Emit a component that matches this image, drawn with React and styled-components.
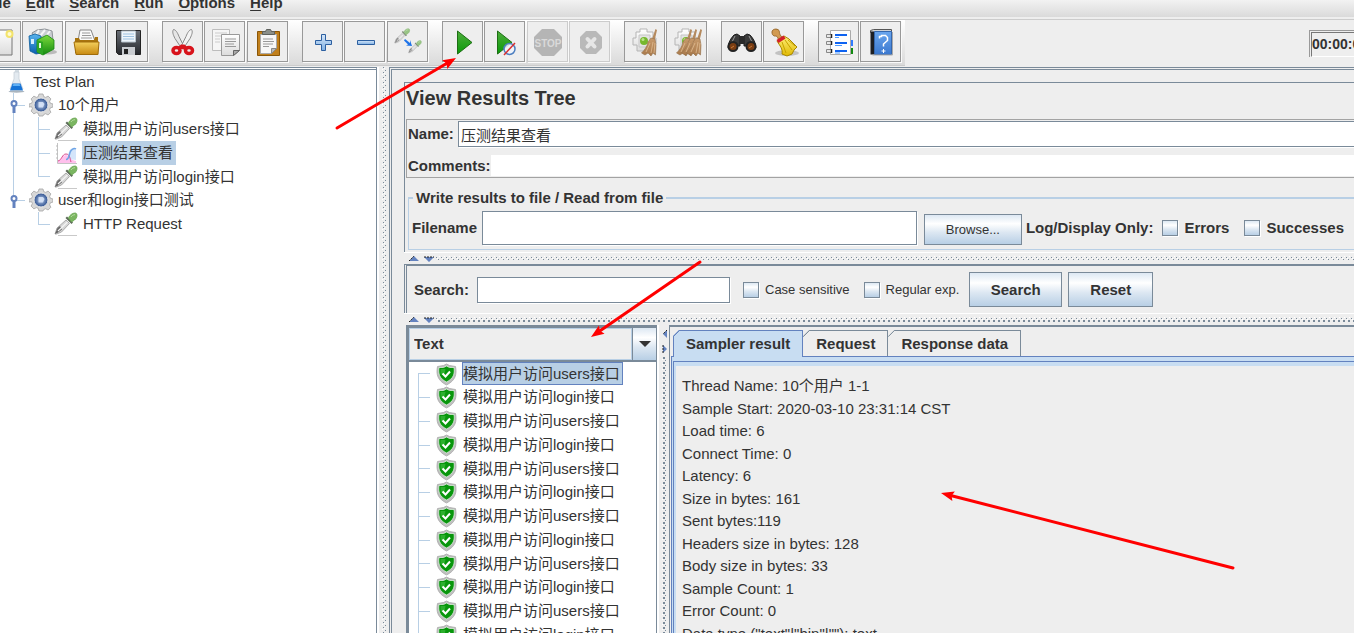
import React from "react";
import styled, { createGlobalStyle, css } from "styled-components";

const C = {
  face: "#eeeeee",
  text: "#333333",
  line: "#7a8a99",
  soft: "#b8cfe5",
  accent: "#6382bf",
  tab: "#c8ddf2",
};

const GlobalStyle = createGlobalStyle`
  *, *::before, *::after { box-sizing: border-box; }
  body {
    margin: 0;
    background: ${C.face};
    color: ${C.text};
    font: 15px/20px "Liberation Sans", "Noto Sans CJK SC", sans-serif;
  }
  button, input, select { font: inherit; color: inherit; margin: 0; }
`;

const metal = "linear-gradient(#dde8f3 0%, #ffffff 30%, #dce7f2 60%, #b8cfe5 100%)";
const dot = (size, color) => `conic-gradient(at ${size}px ${size}px, transparent 75%, ${color} 0)`;
const bumps = css`
  background-color: ${C.face};
  background-image:
    ${dot(1, C.line)},
    ${(p) => dot(p.$heavy ? 2 : 1, C.line)},
    ${dot(1, "#fff")},
    ${dot(1, "#fff")};
  background-size: 5px 5px;
`;

/* ---------- shell ---------- */
const Shell = styled.div`
  position: relative;
  display: flex;
  flex-direction: column;
  height: 100vh;
  overflow: hidden;
`;

const MenuBar = styled.nav`
  display: flex;
  gap: 15px;
  flex: none;
  height: 20px;
  margin-left: -15px;
  border-bottom: 1px solid #cccccc;
  background: linear-gradient(#f2f2f2 0, #dadada 17px, ${C.face} 17px);
`;

const MenuItem = styled.button`
  height: 20px;
  margin-top: -7px;
  padding: 0;
  border: 0;
  background: none;
  font-weight: bold;
  line-height: 20px;
  white-space: nowrap;
  u { text-underline-offset: 2px; }
`;

const ToolRow = styled.div`
  display: flex;
  flex: none;
  justify-content: space-between;
  align-items: flex-start;
  height: 46px;
  margin-bottom: 1px;
`;

const ToolBar = styled.div`
  display: flex;
  gap: 14px;
  height: 46px;
  margin-left: -20px;
  padding: 1px 4px 4px 0;
  border-bottom: 1px solid #cccccc;
  background: linear-gradient(#ffffff, #dadada);
`;

const ToolGroup = styled.div`
  display: flex;
  gap: 1px;
`;

const ToolButton = styled.button`
  width: 41px;
  height: 41px;
  padding: 0;
  border: 1px solid ${(p) => (p.disabled ? "#cccccc" : "#999999")};
  background: ${C.face};
  box-shadow: 1px 1px 0 #fafafa;
  &:nth-child(3n) { margin-left: 1px; }
  svg { display: block; }
`;

const Timer = styled.output`
  width: 45px;
  height: 27px;
  margin-top: 10px;
  overflow: hidden;
  border: solid #999999;
  border-width: 1px 0 0 1px;
  padding: 1px 0 0 1px;
  span {
    display: block;
    height: 25px;
    border-top: 1px solid #777777;
    border-left: 1px solid #777777;
    border-bottom: 1px solid #ffffff;
    font-size: 14px;
    font-weight: bold;
    line-height: 23px;
    white-space: nowrap;
  }
`;

const Workspace = styled.div`
  display: flex;
  flex: 1;
  min-height: 0;
`;

/* ---------- trees ---------- */
const TreePane = styled.aside`
  flex: 0 0 377px;
  border-top: 3px double ${C.line};
  border-right: 1px solid ${C.line};
  background: #ffffff;
  padding-left: 4px;
`;

const TreeList = styled.ul`
  display: grid;
  grid-auto-rows: 23px 24px 24px 24px;
  margin: 0;
  padding: 0;
  list-style: none;
`;

const TreeRow = styled.li`
  display: flex;
  align-items: center;
  white-space: nowrap;
  > svg { flex: none; margin-right: 4px; }
`;

const rail = `linear-gradient(${C.soft}, ${C.soft}) no-repeat`;
const guideLines = {
  none: "none",
  pass: `${rail} 9px 0 / 1px 100%`,
  first: `${rail} 9px 100% / 1px 50%, ${rail} 9px 50% / 12px 1px`,
  tee: `${rail} 9px 0 / 1px 100%, ${rail} 9px 50% / 12px 1px`,
  end: `${rail} 9px 0 / 1px 50%, ${rail} 9px 50% / 12px 1px`,
};

const Guide = styled.span`
  flex: none;
  align-self: stretch;
  display: flex;
  align-items: center;
  width: 25px;
  padding-left: 5px;
  background: ${(p) => guideLines[p.$kind]};
`;

const NodeLabel = styled.span`
  height: 100%;
  padding: 0 3px 0 1px;
  line-height: 23px;
  background: ${(p) => (p.$selected ? C.soft : "transparent")};
  box-shadow: ${(p) => (p.$focused ? `inset 0 0 0 1px ${C.accent}` : "none")};
`;

/* ---------- splitters ---------- */
const VSplitter = styled.div`
  flex: 0 0 12px;
  border-left: 2px solid #ffffff;
  padding-left: 3px;
  &::before {
    content: "";
    display: block;
    width: 5px;
    height: 100%;
    ${bumps}
    background-position: 3px 3px, 1px 0, 0 2px, 2px 1px;
  }
`;

const HSplitter = styled.div`
  display: flex;
  align-items: center;
  flex: none;
  height: 12px;
  border-top: 1px solid #ffffff;
  padding-left: 5px;
  svg { flex: none; margin-right: 2px; }
  &::after {
    content: "";
    flex: 1;
    height: 5px;
    ${bumps}
    background-position: 0 1px, 2px 3px, 3px 0, 1px 2px;
  }
`;

const ResultSplitter = styled(VSplitter)`
  display: flex;
  flex-direction: column;
  svg { flex: none; margin: 4px 0 2px; }
  &::before { order: 2; height: auto; flex: 1; }
`;

/* ---------- main pane ---------- */
const MainPane = styled.main`
  display: flex;
  flex: 1;
  flex-direction: column;
  min-width: 0;
  border-top: 3px double ${C.line};
  border-left: 3px double ${C.line};
  padding: 12px 0 0 12px;
`;

const HeaderPanel = styled.section`
  flex: none;
  border-top: 1px solid ${C.line};
  border-left: 1px solid ${C.line};
  padding: 0 0 2px 1px;
`;

const Title = styled.h1`
  margin: 0 0 6px;
  font-size: 20px;
  line-height: 30px;
`;

const NameBox = styled.div`
  display: grid;
  gap: 8px;
  border: 1px solid #a3a3a3;
  border-right: 0;
  padding: 1px 0 1px 1px;
`;

const NameRow = styled.div`
  display: flex;
  align-items: center;
  height: ${(p) => p.$h}px;
`;

const FieldLabel = styled.label`
  flex: none;
  min-width: ${(p) => p.$w || 0}px;
  font-weight: bold;
  white-space: nowrap;
`;

const TextInput = styled.input`
  flex: ${(p) => (p.$w ? `0 0 ${p.$w}px` : "1")};
  min-width: 0;
  height: ${(p) => p.$h}px;
  padding: 0 2px;
  border: 1px solid ${C.line};
  border-width: ${(p) => (p.$bare ? 0 : "1px")};
  border-radius: 0;
  background: #ffffff;
  box-shadow: ${(p) => (p.$bare ? "none" : "1px 1px 0 #ffffff")};
  outline: 0;
`;

const NameInput = styled(TextInput)`
  border-right: 0;
`;

const FileGroup = styled.fieldset`
  min-width: 0;
  margin: 10px 0 0 2px;
  border: solid ${C.soft};
  border-width: 2px 0 1px 1px;
  padding: 3px 10px 4px 3px;
  legend {
    margin-left: 1px;
    padding: 0 3px;
    font-weight: bold;
    line-height: 20px;
  }
`;

const FileRow = styled.div`
  display: flex;
  align-items: center;
  height: 34px;
`;

const MetalButton = styled.button`
  flex: none;
  width: ${(p) => p.$w}px;
  height: ${(p) => p.$h}px;
  padding: 0;
  border: 1px solid ${C.line};
  background: ${metal};
  font-size: ${(p) => (p.$small ? 13 : 15)}px;
  font-weight: ${(p) => (p.$small ? "normal" : "bold")};
  white-space: nowrap;
`;

const BrowseButton = styled(MetalButton)`
  margin: 3px 4px 0 7px;
`;

const Check = styled.label`
  display: flex;
  flex: none;
  align-items: center;
  gap: 6px;
  margin-left: ${(p) => p.$gap}px;
  font-size: ${(p) => (p.$small ? 13 : 15)}px;
  font-weight: ${(p) => (p.$small ? "normal" : "bold")};
  white-space: nowrap;
  input {
    appearance: none;
    width: 16px;
    height: 16px;
    border: 1px solid ${C.line};
    background: ${metal};
    box-shadow: 1px 1px 0 #ffffff;
  }
`;

const SearchPanel = styled.form`
  display: flex;
  flex: none;
  align-items: center;
  border-top: 2px solid ${C.line};
  border-left: 3px double ${C.line};
  padding: 6px 0 6px 7px;
`;

const SearchButtons = styled.div`
  display: flex;
  gap: 6px;
  margin-left: 10px;
`;

const Results = styled.div`
  display: flex;
  flex: 1;
  min-height: 0;
  margin-left: 2px;
`;

const ResultList = styled.section`
  display: flex;
  flex: 0 0 251px;
  flex-direction: column;
  min-height: 0;
  border: solid ${C.line};
  border-width: 3px 1px 0 3px;
  background: #ffffff;
  overflow: hidden;
`;

const Combo = styled.div`
  display: flex;
  flex: none;
  height: 34px;
  border-bottom: 2px solid ${C.line};
  background: ${C.face};
`;

const ComboSelect = styled.select`
  appearance: none;
  flex: 1;
  min-width: 0;
  border: 1px solid ${C.soft};
  border-radius: 0;
  padding: 0 4px;
  background: ${C.face};
  font-weight: bold;
`;

const ComboArrow = styled.span`
  display: flex;
  align-items: center;
  justify-content: center;
  width: 24px;
  border-left: 1px solid ${C.line};
  background: ${metal};
`;

const TabPanel = styled.section`
  display: flex;
  flex: 1;
  flex-direction: column;
  min-width: 0;
  border-top: 2px solid ${C.line};
  border-left: 1px solid ${C.line};
  padding: 3px 0 0 1px;
  overflow: hidden;
`;

const TabStrip = styled.div`
  display: flex;
  flex: none;
  height: 26px;
  padding-left: 2px;
`;

const Tab = styled.button`
  position: relative;
  height: ${(p) => (p.$active ? 27 : 26)}px;
  padding: 0 12px;
  border: 1px solid ${(p) => (p.$active ? C.accent : C.line)};
  border-bottom: 0;
  border-left-color: ${(p) => (p.$active ? C.accent : "transparent")};
  background:
    linear-gradient(135deg, ${C.face} 4px, ${(p) => (p.$active ? C.accent : C.line)} 4px, ${(p) => (p.$active ? C.accent : C.line)} 5px, transparent 5px) border-box,
    ${(p) => (p.$active ? C.tab : C.face)};
  clip-path: polygon(6px 0, 100% 0, 100% 100%, 0 100%, 0 6px);
  font-weight: bold;
  line-height: 24px;
  white-space: nowrap;
`;

const TabFrame = styled.div`
  flex: 1;
  display: flex;
  border-top: 1px solid ${C.accent};
  border-left: 1px solid ${C.accent};
  padding: 4px 0 0 1px;
  background: ${C.tab};
`;

const TabBody = styled.div`
  flex: 1;
  display: flex;
  border-top: 1px solid ${C.accent};
  border-left: 1px solid ${C.accent};
  padding: 4px 0 0 2px;
`;

const Details = styled.div`
  flex: 1;
  display: grid;
  grid-auto-rows: 23px 22px;
  align-content: start;
  padding: 9px 0 0 6px;
  background: ${C.face};
  line-height: 22px;
  white-space: nowrap;
`;

const Annotations = styled.svg`
  position: absolute;
  top: 0;
  left: 0;
  pointer-events: none;
`;

const DefsSvg = styled.svg`
  position: absolute;
`;

/* ---------- drawings ---------- */
function Defs() {
  const grads = [
    ["gold", "#f3cf5c", "#c88a12"],
    ["green", "#7ddb3c", "#128a10"],
    ["play", "#4fae3c", "#0a9a0a"],
    ["blue", "#58b4ee", "#0a5fae"],
    ["book", "#6aa6ee", "#3b78cf"],
    ["dark", "#6a6f77", "#25272b"],
    ["paper", "#ffffff", "#dcdcdc"],
    ["plus", "#d6e6f7", "#7fb0e4"],
    ["broom", "#c79a6c", "#a9794a"],
    ["yellow", "#fff07a", "#e0b800"],
  ];
  return (
    <DefsSvg width="0" height="0" aria-hidden="true">
      <defs>
        {grads.map(([id, a, b]) => (
          <linearGradient key={id} id={id} x1="0" y1="0" x2="0" y2="1">
            <stop offset="0" stopColor={a} />
            <stop offset="1" stopColor={b} />
          </linearGradient>
        ))}
        <radialGradient id="orb">
          <stop offset="0" stopColor="#b9cdec" />
          <stop offset="1" stopColor="#2a4d8c" />
        </radialGradient>
      </defs>
    </DefsSvg>
  );
}

const gearPath =
  "M10 1h4l.7 2.6 2 .8 2.4-1.3 2.8 2.8-1.3 2.4.8 2L24 11v3l-2.6.8-.8 2 1.3 2.4-2.8 2.8-2.4-1.3-2 .8L14 23h-4l-.7-2.6-2-.8-2.4 1.3-2.8-2.8 1.3-2.4-.8-2L0 14v-3l2.6-.7.8-2L2.1 5.900 4.900 3.100l2.400 1.300 2-.8z";

const Pipette = ({ x = 0, y = 0, s = 1 }) => (
  <g transform={`translate(${x} ${y}) scale(${s})`}>
    <path d="M1 22l2-6L12 8l3.500 3.500-8 8.500-5 2z" fill="#d6d6d6" stroke="#9a9a9a" strokeWidth=".8" />
    <path d="M1 22l2.500-6 2.500-2 2 3.500-4 3z" fill="#666" />
    <path d="M4 19l9.500-9" stroke="#f4f4f4" strokeWidth="1.200" />
    <path d="M11.500 6l6 6 1.500-1.500-6-6z" fill="#5d6a58" />
    <path d="M14.500 6c1-3 4-5 6.500-5C24 1 23.500 6 20.500 8l-3 2z" fill="#7bb661" stroke="#69a552" strokeWidth=".8" />
    <path d="M17 5c1-1.500 2.500-2.300 4-2.300" stroke="#b4dc9f" fill="none" />
  </g>
);

const Brush = ({ x }) => (
  <g transform={`translate(${x} 0)`}>
    <path d="M13.500 8l1.500 1-3 13-3-1z" fill="#b58a5e" />
    <path d="M6 21l3-4 4 1 1 6-.5 10-2.500-2-2 3-3-3-3 2-3.500-2c3-3 5.500-6 6.500-11z" fill="url(#broom)" stroke="#94704c" strokeWidth=".6" />
    <path d="M8 22l-4 9M11 21l-2 11M13 22l-1 10" stroke="#e0bd93" strokeWidth=".8" />
  </g>
);

const ClearGear = () => (
  <>
    <path d="M12 11h4V8h7v3h6v6h3v6h-3v7H13v-6H9v-7h3z" fill="url(#paper)" stroke="#b5b5b5" />
    <path d="M15 14h11v12H15z" fill="#e4e4e4" stroke="#c6c6c6" />
    <circle cx="20" cy="20" r="4" fill="#76b82e" />
    <circle cx="19" cy="18.500" r="1.500" fill="#b9e28a" />
  </>
);

const Lines = ({ d, c = "#aaa" }) => <path d={d} stroke={c} fill="none" />;

const glyphs = {
  create: (
    <>
      <path d="M6 9h26v25H6z" fill="url(#paper)" stroke="#777" />
      <circle cx="29.500" cy="13" r="3" fill="#fffbd0" stroke="#f3e36b" strokeWidth="2" />
    </>
  ),
  templates: (
    <>
      <ellipse cx="26" cy="31" rx="9" ry="2.500" fill="#bbb" />
      <path d="M10 12l5-3 8-1 7 2 1 9-16 3z" fill="#c9cdd1" stroke="#8d9297" />
      <path d="M13 16l4-7M18 15l5-6M24 15l4-5" stroke="#f5f5f5" strokeWidth="2" />
      <path d="M7 15l6-2 6 2v17l-5 1-6-3z" fill="url(#blue)" stroke="#0d5c9c" strokeWidth=".8" />
      <path d="M9 18h3v5H9z" fill="#d7effc" />
      <path d="M15 19l10-5 7 5v9l-11 6-6-3z" fill="url(#green)" stroke="#17860f" strokeWidth=".8" />
      <path d="M15 19l6 2v13l-6-3z" fill="#2da524" />
      <path d="M17 22h2v5h-2z" fill="#e2f7d8" />
    </>
  ),
  open: (
    <>
      <path d="M13 20l2-11h11l4 11z" fill="#fafafa" stroke="#888" />
      <Lines d="M17 12h8M17 14.500h9M16 17h11" c="#999" />
      <path d="M10 17h4l1 2h14l1-3h3v16H10z" fill="#a8740f" />
      <path d="M9 21h25l-1 12.500H11z" fill="url(#gold)" stroke="#a06d0c" />
    </>
  ),
  save: (
    <>
      <path d="M9.500 9.500h24v24h-22l-2-2z" fill="url(#dark)" stroke="#222" />
      <path d="M14.500 10h14v11h-14z" fill="#eef5fb" stroke="#b7c3cc" />
      <Lines d="M16 13h11M16 15.500h11M16 18h11" c="#9ec2e0" />
      <path d="M15 26h13v8H15z" fill="#c9ccd0" />
      <path d="M17 28h4v5h-4z" fill="#222" />
    </>
  ),
  cut: (
    <>
      <path d="M11.500 8.500c2 0 4 3 5.500 7l5 10-3 1-6-9c-2-4-3-7-1.500-9z" fill="#e6e6e6" stroke="#8a8a8a" />
      <path d="M29.500 8.500c-2 0-4 3-5.500 7l-5 10 3 1 6-9c2-4 3-7 1.500-9z" fill="#f4f4f4" stroke="#8a8a8a" />
      <ellipse cx="14.500" cy="29.500" rx="3.500" ry="3" fill="none" stroke="#d8141c" strokeWidth="3.500" />
      <ellipse cx="27" cy="29.500" rx="3.500" ry="3" fill="none" stroke="#d8141c" strokeWidth="3.500" />
      <path d="M15 27l4-3.500h3.500l4 3.500-5 1.500z" fill="#d8141c" />
    </>
  ),
  copy: (
    <>
      <path d="M8.500 8.500h17v21h-17z" fill="#f6f6f6" stroke="#bdbdbd" />
      <Lines d="M11 12h12M11 15h12M11 18h5M11 21h5" c="#ccc" />
      <path d="M17.500 13.500h18v16l-6 5h-12z" fill="url(#paper)" stroke="#999" />
      <path d="M29.500 34.500v-5h6z" fill="#aaa" stroke="#666" />
      <Lines d="M21 18h11M21 20.500h11M21 23h9M21 25.500h11" c="#999" />
    </>
  ),
  paste: (
    <>
      <path d="M10.500 10.500h22v24h-22z" fill="#c07f1c" stroke="#8a5607" />
      <path d="M13.500 13.500h16v14l-5 5h-11z" fill="#f7f7f7" stroke="#aaa" />
      <path d="M24.500 32.500v-5h5z" fill="#bbb" stroke="#888" />
      <path d="M15.500 13.500v-3h3l1-2h4l1 2h3v3z" fill="#8b8f8a" stroke="#5f625e" />
      <Lines d="M16 18h10M16 20.500h11M16 23h10M16 25.500h6" c="#999" />
    </>
  ),
  expand: <path d="M19.500 13.500h4v6h6v4h-6v6h-4v-6h-6v-4h6z" fill="url(#plus)" stroke="#2c5fa0" />,
  collapse: <path d="M13.500 19.500h17v4h-17z" fill="url(#plus)" stroke="#2c5fa0" />,
  toggle: (
    <>
      <g opacity=".75"><Pipette x={7} y={7} s={0.68} /></g>
      <g opacity=".75"><Pipette x={21} y={19} s={0.58} /></g>
      <path d="M18 18l5 4v-3l2 6-6-.5 2-1-4-4z" fill="#1e73e8" />
    </>
  ),
  start: <path d="M15.500 10v23L30 21.500z" fill="url(#play)" stroke="#1d6e14" />,
  startNoPause: (
    <>
      <path d="M13.500 10v23L28 21.500z" fill="url(#play)" stroke="#1d6e14" />
      <circle cx="25.500" cy="28" r="5.500" fill="#eef3fa" fillOpacity=".85" stroke="#4d7fc0" strokeWidth="1.500" />
      <path d="M20 34l11-12" stroke="#d83030" strokeWidth="1.500" />
    </>
  ),
  stop: (
    <>
      <path d="M15 8h12l8 8v11l-8 8H15l-8-8V16z" fill="#b5b5b5" />
      <text x="21" y="26" textAnchor="middle" fontSize="10" fontWeight="bold" fill="#dadada" fontFamily="Liberation Sans, sans-serif">STOP</text>
    </>
  ),
  shutdown: (
    <>
      <path d="M17 10h10l6 6v11l-6 6H17l-6-6V16z" fill="#b9b9b9" />
      <path d="M18.500 18l7 7.500M25.500 18l-7 7.500" stroke="#e6e6e6" strokeWidth="4" strokeLinecap="round" />
    </>
  ),
  clear: (
    <>
      <ClearGear />
      <Brush x={18} />
    </>
  ),
  clearAll: (
    <>
      <ClearGear />
      <Brush x={11} />
      <Brush x={16} />
      <Brush x={21} />
    </>
  ),
  find: (
    <>
      <path d="M13 14l3-1 3 2v10h-8l-4 2c0-5 3-10 6-13zM29 14l-3-1-3 2v10h8l4 2c0-5-3-10-6-13z" fill="#3a3a3a" stroke="#1c1c1c" />
      <path d="M18 15h6v8h-6z" fill="#2a2a2a" />
      <path d="M14 15l-3 6M28 15l3 6" stroke="#999" />
      <circle cx="12" cy="25.500" r="4.500" fill="#7a3d12" stroke="#222" strokeWidth="2" />
      <circle cx="30" cy="25.500" r="4.500" fill="#7a3d12" stroke="#222" strokeWidth="2" />
      <path d="M10 27l3-2M28 27l3-2" stroke="#c87a3a" />
    </>
  ),
  resetFind: (
    <>
      <ellipse cx="24" cy="32" rx="12" ry="3" fill="#c2c2c2" />
      <path d="M14 20l7-5 5 3 8 8-3 3-2 4-5 2-5-2c1-5-2-8-5-13z" fill="url(#yellow)" stroke="#a98700" />
      <path d="M19 21l4 11M22 19l7 10M25 19l7 6" stroke="#c8a200" />
      <path d="M9 11c0-3 5-4 7-1.500 1 2-.5 3.500 3.500 7l-4 2.500c-1-4-2-4-4-4-2-.5-2.500-2-2.500-4z" fill="#d29b52" stroke="#9a6a2c" />
      <path d="M13.500 19l7-4.500 2 3-7 4.500z" fill="#d3202a" />
    </>
  ),
  functions: (
    <>
      <path d="M32 19h3v6h-3z" fill="#2f7bff" />
      <path d="M32 27h3v6h-3z" fill="#128a10" />
      <path d="M12.500 9.500h20v24h-20z" fill="#fdfdfd" stroke="#aaa" />
      <path d="M17 14h12M17 22h12M17 30h12" stroke="#0d62f0" strokeWidth="2" />
      <path d="M17 16.500h4M17 24.500h7M17 32h5" stroke="#4f9aff" />
      <path d="M8.500 13.500h5v3h-5zM8.500 20.500h5v3h-5zM8.500 28.500h5v3h-5z" fill="#e8e8e8" stroke="#888" />
      <path d="M13.500 13v4M13.500 20v4M13.500 28v4" stroke="#222" strokeWidth="1.500" />
    </>
  ),
  help: (
    <>
      <path d="M10.500 9.500l3-1h18v3h-21z" fill="#cfd2d6" stroke="#555" />
      <path d="M10.500 10.500h4v23h-4z" fill="#1d1f24" />
      <path d="M14.500 10.500h17v23h-17z" fill="url(#book)" stroke="#3467ae" />
      <path d="M32.500 11v23h-20" fill="none" stroke="#aaa" />
      <path d="M19.500 17.500v-2h2v-1h4l1 1 1 1v3l-4 3.500v2.500" fill="none" stroke="#fff" strokeWidth="1.500" />
      <path d="M21.500 30h4M23.500 28v4" stroke="#fff" />
    </>
  ),
};

const ToolGlyph = ({ name }) => (
  <svg width="39" height="39" viewBox="1 1 39 39" fill="none" aria-hidden="true">
    {glyphs[name]}
  </svg>
);

const nodeArt = {
  plan: (
    <>
      <path d="M11 0l4-1v9h-4z" fill="#d5dde4" />
      <path d="M10 2h5v7l4 10H6l4-10z" fill="#e3eaf0" stroke="#c2ccd4" strokeWidth=".7" />
      <path d="M8.500 13.500h8L19 20.500H6z" fill="#1673d6" />
      <path d="M9.500 14h6l1 2h-8z" fill="#5fb0f5" />
      <ellipse cx="12.500" cy="21.500" rx="8" ry="1.200" fill="#a9b4be" />
    </>
  ),
  group: (
    <>
      <path d={gearPath} fill="#d8d8d8" stroke="#a4a4a4" strokeWidth=".8" />
      <circle cx="12" cy="12" r="7" fill="url(#orb)" stroke="#e9e9e9" />
      <path d="M9.500 9h4.500l1.500 2-1.500 3.500H9.500z" fill="#dce8fa" opacity=".85" />
    </>
  ),
  sampler: (
    <>
      <path d="M4 23.500h19" stroke="#c9c9c9" />
      <Pipette />
    </>
  ),
  listener: (
    <>
      <path d="M3.500 2v20.500H23" fill="none" stroke="#c4c4c4" />
      <path d="M2 5h2M2 9h2M2 13h2M2 17h2" stroke="#bbb" />
      <path d="M4 20c4-2 5-6 8-6s4 5 10 6v2H4z" fill="#ffc0ec" />
      <path d="M14 18c0-6 1-10 5-11 2-.5 3 .5 3 1.500V19z" fill="#cfe2fa" opacity=".9" />
      <path d="M4 20c4-1 4-7 8-7s4 5 5 8" fill="none" stroke="#d94a8c" />
      <path d="M12 18.500c3 0 3-4 4-7s4-5 6-3.500" fill="none" stroke="#6ea4e6" strokeWidth="1.500" />
    </>
  ),
  passed: (
    <>
      <path d="M12.500 2l3 1.500 6 1c1.500 8 0 14-9 18.500-9-4.500-10.500-10.500-9-18.500l6-1z" fill="#c0c0c0" stroke="#a8a8a8" strokeWidth=".8" />
      <path d="M12.500 4l3 1.500h4.500c1 6.500-.5 11-7.500 14.500C5.500 16.500 4 12 5 5.500h4.500z" fill="#08960c" stroke="#dcebdc" strokeWidth=".8" />
      <path d="M6.500 7h5l-1 5.500H6.500z" fill="#45c045" opacity=".6" />
      <path d="M8.500 11.500l3 3 4.500-5" fill="none" stroke="#fff" strokeWidth="2" />
    </>
  ),
};

const NodeArt = ({ kind }) => (
  <svg width="24" height="24" viewBox="0 0 24 24" aria-hidden="true">
    {nodeArt[kind]}
  </svg>
);

const Handle = () => (
  <svg width="10" height="16" viewBox="0 0 10 16" aria-hidden="true">
    <path d="M3.500 8h3v8h-3z" fill={C.accent} />
    <circle cx="5" cy="6.500" r="2.500" fill="#fff" stroke={C.accent} strokeWidth="2" />
  </svg>
);

const OneTouch = ({ vertical }) =>
  vertical ? (
    <svg width="6" height="26" viewBox="0 0 6 26" aria-hidden="true">
      <path d="M5 1v8L1 5zM1 16v8l4-4z" fill={C.accent} />
      <path d="M5 1L1 5M1 16v8" stroke="#222" strokeDasharray="2 1" fill="none" />
    </svg>
  ) : (
    <svg width="25" height="6" viewBox="0 0 25 6" aria-hidden="true">
      <path d="M0 5h10L5 0zM15 1h10l-5 5z" fill={C.accent} />
      <path d="M0 5l5-5M15 1h10" stroke="#222" strokeDasharray="2 1" fill="none" />
    </svg>
  );

/* ---------- data ---------- */
const menus = ["File", "Edit", "Search", "Run", "Options", "Help"];

const tools = [
  [["create", "New"], ["templates", "Templates"], ["open", "Open"], ["save", "Save"]],
  [["cut", "Cut"], ["copy", "Copy"], ["paste", "Paste"]],
  [["expand", "Expand All"], ["collapse", "Collapse All"], ["toggle", "Toggle"]],
  [["start", "Start"], ["startNoPause", "Start no pauses"], ["stop", "Stop", true], ["shutdown", "Shutdown", true]],
  [["clear", "Clear"], ["clearAll", "Clear All"]],
  [["find", "Search"], ["resetFind", "Reset Search"]],
  [["functions", "Function Helper Dialog"], ["help", "Help"]],
];

const planNodes = [
  { art: "plan", text: "Test Plan", guides: [] },
  { art: "group", text: "10个用户", guides: ["tee"], handle: true },
  { art: "sampler", text: "模拟用户访问users接口", guides: ["pass", "tee"] },
  { art: "listener", text: "压测结果查看", guides: ["pass", "tee"], selected: true },
  { art: "sampler", text: "模拟用户访问login接口", guides: ["pass", "end"] },
  { art: "group", text: "user和login接口测试", guides: ["end"], handle: true },
  { art: "sampler", text: "HTTP Request", guides: ["none", "end"] },
];

const samples = Array.from({ length: 12 }, (_, i) =>
  i % 2 ? "模拟用户访问login接口" : "模拟用户访问users接口"
);

const details = [
  "Thread Name: 10个用户 1-1",
  "Sample Start: 2020-03-10 23:31:14 CST",
  "Load time: 6",
  "Connect Time: 0",
  "Latency: 6",
  "Size in bytes: 161",
  "Sent bytes:119",
  "Headers size in bytes: 128",
  "Body size in bytes: 33",
  "Sample Count: 1",
  "Error Count: 0",
  'Data type ("text"|"bin"|""): text',
];

const arrows = [
  [337, 128, 456, 58],
  [700, 262, 591, 337],
  [1233, 568, 941, 493],
];

function Arrow({ from: [x1, y1, x2, y2] }) {
  const angle = (Math.atan2(y2 - y1, x2 - x1) * 180) / Math.PI;
  const len = Math.hypot(x2 - x1, y2 - y1);
  return (
    <g transform={`translate(${x1} ${y1}) rotate(${angle})`}>
      <path d={`M0 0H${len - 8}`} stroke="#ff0000" strokeWidth="3" strokeLinecap="round" />
      <path d={`M${len} 0l-13-5 2 5-2 5z`} fill="#ff0000" />
    </g>
  );
}

export default function App() {
  return (
    <Shell>
      <GlobalStyle />
      <Defs />
      <MenuBar>
        {menus.map((m) => (
          <MenuItem key={m} type="button">
            <u>{m[0]}</u>
            {m.slice(1)}
          </MenuItem>
        ))}
      </MenuBar>
      <ToolRow>
        <ToolBar role="toolbar">
          {tools.map((group, i) => (
            <ToolGroup key={i}>
              {group.map(([name, label, off]) => (
                <ToolButton key={name} type="button" aria-label={label} disabled={off}>
                  <ToolGlyph name={name} />
                </ToolButton>
              ))}
            </ToolGroup>
          ))}
        </ToolBar>
        <Timer><span>00:00:00</span></Timer>
      </ToolRow>

      <Workspace>
        <TreePane>
          <TreeList>
            {planNodes.map((n, i) => (
              <TreeRow key={i}>
                {n.guides.map((g, j) => (
                  <Guide key={j} $kind={g}>{n.handle && <Handle />}</Guide>
                ))}
                <NodeArt kind={n.art} />
                <NodeLabel $selected={n.selected}>{n.text}</NodeLabel>
              </TreeRow>
            ))}
          </TreeList>
        </TreePane>
        <VSplitter />

        <MainPane>
          <HeaderPanel>
            <Title>View Results Tree</Title>
            <NameBox>
              <NameRow $h={26}>
                <FieldLabel htmlFor="name" $w={50}>Name:</FieldLabel>
                <NameInput id="name" $h={26} defaultValue="压测结果查看" />
              </NameRow>
              <NameRow $h={21}>
                <FieldLabel htmlFor="comments">Comments:</FieldLabel>
                <TextInput id="comments" $h={21} $bare />
              </NameRow>
            </NameBox>
            <FileGroup>
              <legend>Write results to file / Read from file</legend>
              <FileRow>
                <FieldLabel htmlFor="filename" $w={70}>Filename</FieldLabel>
                <TextInput id="filename" $h={34} />
                <BrowseButton type="button" $w={98} $h={31} $small>Browse...</BrowseButton>
                <FieldLabel as="span">Log/Display Only:</FieldLabel>
                <Check $gap={9}><input type="checkbox" />Errors</Check>
                <Check $gap={15}><input type="checkbox" />Successes</Check>
              </FileRow>
            </FileGroup>
          </HeaderPanel>

          <HSplitter><OneTouch /></HSplitter>

          <SearchPanel onSubmit={(e) => e.preventDefault()}>
            <FieldLabel htmlFor="search" $w={63}>Search:</FieldLabel>
            <TextInput id="search" $w={253} $h={26} />
            <Check $gap={13} $small><input type="checkbox" />Case sensitive</Check>
            <Check $gap={14} $small><input type="checkbox" />Regular exp.</Check>
            <SearchButtons>
              <MetalButton type="submit" $w={93} $h={35}>Search</MetalButton>
              <MetalButton type="reset" $w={85} $h={35}>Reset</MetalButton>
            </SearchButtons>
          </SearchPanel>

          <HSplitter $heavy><OneTouch /></HSplitter>

          <Results>
            <ResultList>
              <Combo>
                <ComboSelect aria-label="Renderer"><option>Text</option></ComboSelect>
                <ComboArrow>
                  <svg width="12" height="6" viewBox="0 0 12 6" aria-hidden="true">
                    <path d="M0 0h12L6 6z" fill={C.text} />
                  </svg>
                </ComboArrow>
              </Combo>
              <TreeList>
                {samples.map((s, i) => (
                  <TreeRow key={i}>
                    <Guide $kind={i ? "tee" : "first"} />
                    <NodeArt kind="passed" />
                    <NodeLabel $selected={i === 0} $focused={i === 0}>{s}</NodeLabel>
                  </TreeRow>
                ))}
              </TreeList>
            </ResultList>
            <ResultSplitter $heavy><OneTouch vertical /></ResultSplitter>
            <TabPanel>
              <TabStrip role="tablist">
                <Tab type="button" role="tab" aria-selected="true" $active>Sampler result</Tab>
                <Tab type="button" role="tab" aria-selected="false">Request</Tab>
                <Tab type="button" role="tab" aria-selected="false">Response data</Tab>
              </TabStrip>
              <TabFrame>
                <TabBody>
                  <Details>
                    {details.map((d) => <div key={d}>{d}</div>)}
                  </Details>
                </TabBody>
              </TabFrame>
            </TabPanel>
          </Results>
        </MainPane>
      </Workspace>

      <Annotations width="1354" height="633" fill="none" aria-hidden="true">
        {arrows.map((a, i) => <Arrow key={i} from={a} />)}
      </Annotations>
    </Shell>
  );
}
